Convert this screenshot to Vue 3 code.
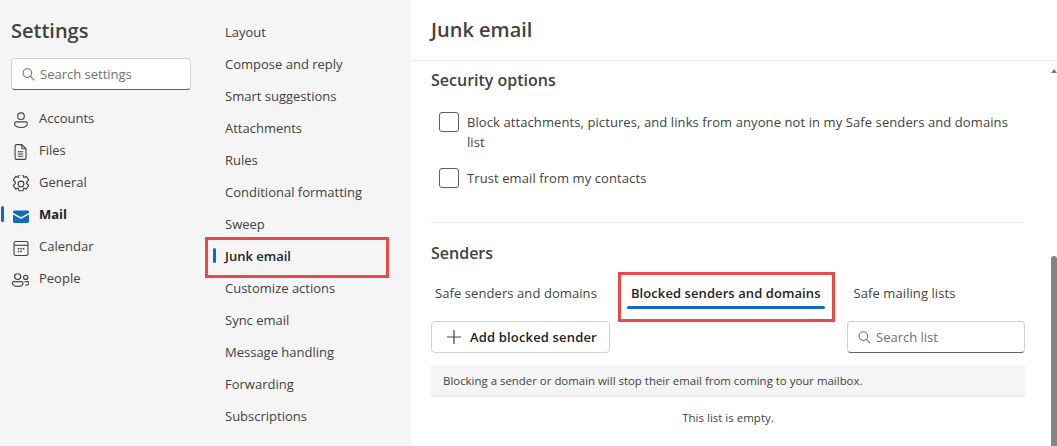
<template>
  <div class="settings">
    <!-- first column -->
    <aside class="nav">
      <h1>Settings</h1>
      <div class="search nav-search">
        <svg class="search-ico" viewBox="0 0 16 16"><circle cx="6.8" cy="6.5" r="4.6" /><path d="M10.2 10l4 4.2" /></svg>
        <span>Search settings</span>
      </div>
      <ul class="nav-list">
        <li v-for="item in navItems" :key="item.name" :class="{ on: item.name === 'Mail' }">
          <svg class="nav-ico" viewBox="0 0 18 18" v-html="item.icon"></svg>
          {{ item.name }}
        </li>
      </ul>
    </aside>

    <!-- second column -->
    <nav class="sub">
      <div
        v-for="item in subItems"
        :key="item"
        class="sub-item"
        :class="{ on: item === 'Junk email' }"
      >
        {{ item }}
      </div>
      <div class="mark sub-mark"></div>
    </nav>

    <!-- content -->
    <main class="content">
      <header class="title">Junk email</header>
      <div class="body">
        <h2>Security options</h2>
        <label class="check first">
          <i class="box"></i>
          <span>Block attachments, pictures, and links from anyone not in my Safe senders and domains list</span>
        </label>
        <label class="check second">
          <i class="box"></i>
          <span>Trust email from my contacts</span>
        </label>
        <hr />
        <h2 class="senders">Senders</h2>
        <div class="tabs">
          <div class="tab">Safe senders and domains</div>
          <div class="tab active">Blocked senders and domains</div>
          <div class="tab">Safe mailing lists</div>
          <div class="mark tab-mark"></div>
        </div>
        <div class="tools">
          <button class="add">
            <svg viewBox="0 0 16 16"><path d="M8 1v14M1 8h14" /></svg>
            Add blocked sender
          </button>
          <div class="search list-search">
            <svg class="search-ico" viewBox="0 0 16 16"><circle cx="6.8" cy="6.5" r="4.6" /><path d="M10.2 10l4 4.2" /></svg>
            <span>Search list</span>
          </div>
        </div>
        <div class="note">Blocking a sender or domain will stop their email from coming to your mailbox.</div>
        <div class="empty">This list is empty.</div>
      </div>
      <div class="scroll">
        <i class="arrow"></i>
        <i class="thumb"></i>
      </div>
    </main>
  </div>
</template>

<script setup>
const navItems = [
  { name: "Accounts", icon: '<g transform="translate(1 0)"><circle cx="9" cy="5.2" r="3.3"/><path d="M2.6 12.6c0-1 .8-1.7 1.8-1.7h9.2c1 0 1.8.7 1.8 1.7 0 2.6-3 3.9-6.4 3.9s-6.4-1.3-6.4-3.900z"/></g>' },
  { name: "Files", icon: '<g transform="translate(1 0)"><path d="M4.5 1.6h5.3l4.2 4.2v9.2c0 .8-.6 1.4-1.4 1.4H4.5c-.8 0-1.4-.6-1.4-1.4V3c0-.8.6-1.4 1.4-1.4z"/><path d="M9.8 1.6v3.2c0 .6.4 1 1 1H14M5.800 8.800h5.400M5.800 11h5.400M5.800 13.200h5.400"/></g>' },
  { name: "General", icon: '<g transform="translate(10 9) scale(1.25) translate(-9 -9)" stroke-width=".9"><circle cx="9" cy="9" r="2.3"/><path d="M7.3 1.6h3.4l.5 2.2 2-.9 2 3-1.6 1.5v1.2l1.600 1.500-2 3-2-.9-.5 2.200H7.300l-.5-2.200-2 .9-2-3 1.600-1.500V7.400L2.800 5.900l2-3 2 .9z" stroke-linejoin="round"/></g>' },
  { name: "Mail", icon: '<g transform="translate(1 1.5)"><path class="fill" d="M1 3.5c0-.9.8-1.500 1.800-1.500h12.400c1 0 1.800.6 1.800 1.500v.8L9 8.700 1 4.300z"/><path class="fill" d="M1 6l7.600 4.200c.3.1.5.1.8 0L17 6v6.800c0 1-.8 1.800-1.800 1.800H2.800c-1 0-1.800-.8-1.800-1.800z"/></g>' },
  { name: "Calendar", icon: '<g transform="translate(.5 .5)"><rect x="2.5" y="2" width="14" height="14" rx="1.8"/><path d="M2.5 5.800h14"/><path class="dots" d="M6.300 8.600h1.500v1.500H6.300zM8.800 8.600h1.500v1.500H8.800zM11.300 8.600h1.500v1.500h-1.500zM6.300 11.300h1.500v1.500H6.300zM8.800 11.300h1.500v1.500H8.800z"/></g>' },
  { name: "People", icon: '<g transform="scale(1.08 1)"><circle cx="6.2" cy="5.6" r="2.9"/><circle cx="13.6" cy="6.4" r="2"/><path d="M1.3 12c0-.9.7-1.400 1.500-1.400h6.800c.8 0 1.500.5 1.500 1.400 0 2.400-2.400 3.400-4.900 3.400S1.300 14.400 1.300 12zM12.600 10.600h3c.7 0 1.200.5 1.200 1.200 0 1.700-1.500 2.500-3.600 2.500"/></g>' },
]

const subItems = [
  "Layout",
  "Compose and reply",
  "Smart suggestions",
  "Attachments",
  "Rules",
  "Conditional formatting",
  "Sweep",
  "Junk email",
  "Customize actions",
  "Sync email",
  "Message handling",
  "Forwarding",
  "Subscriptions",
]
</script>

<style>
html,
body {
  margin: 0;
  background: #fff;
  overflow: hidden;
}
</style>

<style scoped>
.settings {
  display: flex;
  height: 446px;
  width: 1057px;
  overflow: hidden;
  font-family: "Open Sans", "Noto Sans", sans-serif;
  font-size: 13px;
  color: #424242;
}

.nav {
  width: 206px;
  flex: none;
  background: #f5f5f5;
  padding: 0 0 0 11px;
  box-sizing: border-box;
}

h1 {
  margin: 16px 0 0;
  font-size: 20px;
  line-height: 30px;
  font-weight: 600;
  color: #424242;
}

.search {
  display: flex;
  align-items: center;
  box-sizing: border-box;
  height: 32px;
  background: #fff;
  border: 1px solid #d1d1d1;
  border-bottom-color: #616161;
  border-radius: 4px;
  color: #707070;
}

.nav-search {
  width: 180px;
  margin-top: 12px;
  padding-left: 9px;
}

.search-ico {
  width: 15px;
  height: 15px;
  margin-right: 4px;
  fill: none;
  stroke: #707070;
  stroke-width: 1.1;
}

.nav-list {
  list-style: none;
  margin: 12px 0 0;
  padding: 0;
}

.nav-list li {
  position: relative;
  display: flex;
  align-items: center;
  height: 32px;
  gap: 10px;
  color: #424242;
}

.nav-ico {
  width: 18px;
  height: 18px;
  flex: none;
  margin-top: 3px;
  fill: none;
  stroke: #424242;
  stroke-width: 1.1;
}

.nav-ico :deep(.fill) {
  fill: #0f6cbd;
  stroke: none;
}

.nav-ico :deep(.dots) {
  fill: #424242;
  stroke: none;
}

.nav-list li.on {
  font-weight: 700;
  color: #242424;
}

.nav-list li.on::before {
  content: "";
  position: absolute;
  left: -10px;
  top: 8px;
  width: 3px;
  height: 16px;
  border-radius: 2px;
  background: #0f6cbd;
}

.sub {
  position: relative;
  width: 205px;
  flex: none;
  background: #f5f5f5;
  padding: 16px 0 0 19px;
  box-sizing: border-box;
}

.sub-item {
  position: relative;
  height: 32px;
  line-height: 32px;
}

.sub-item.on {
  font-weight: 600;
  color: #242424;
}

.sub-item.on::before {
  content: "";
  position: absolute;
  left: -12px;
  top: 8px;
  width: 3px;
  height: 15px;
  border-radius: 2px;
  background: #0f6cbd;
}

.mark {
  position: absolute;
  border: 3px solid #e64a49;
  box-sizing: border-box;
  pointer-events: none;
}

.sub-mark {
  left: -1px;
  top: 237px;
  width: 184px;
  height: 41px;
}

.content {
  position: relative;
  flex: 1;
  min-width: 0;
  background: #fff;
}

.title {
  height: 61px;
  box-sizing: border-box;
  border-bottom: 1px solid #ebebeb;
  padding: 15px 0 0 20px;
  font-size: 20px;
  line-height: 30px;
  font-weight: 600;
  color: #424242;
}

.body {
  width: 594px;
  margin-left: 20px;
}

h2 {
  margin: 8px 0 0;
  font-size: 16px;
  line-height: 22px;
  font-weight: 600;
  color: #424242;
}

.check {
  display: flex;
  gap: 8px;
  margin-left: 8px;
  line-height: 20px;
  letter-spacing: 0.09px;
}

.check span {
  width: 551px;
}

.check.first {
  margin-top: 21px;
}

.check.second {
  margin-top: 16px;
}

.box {
  flex: none;
  width: 20px;
  height: 20px;
  box-sizing: border-box;
  border: 1px solid #616161;
  border-radius: 3px;
}

hr {
  border: 0;
  border-top: 1px solid #ebebeb;
  margin: 34px 0 0;
}

.senders {
  margin-top: 19px;
}

.tabs {
  position: relative;
  display: flex;
  margin-top: 11px;
  height: 38px;
  letter-spacing: 0.08px;
}

.tab {
  padding: 0 4px;
  height: 38px;
  line-height: 36px;
  margin-right: 26px;
}

.tab.active {
  font-weight: 600;
  color: #242424;
  position: relative;
  margin-right: 25px;
}

.tab.active::after {
  content: "";
  position: absolute;
  left: 0;
  right: 0;
  bottom: 4px;
  height: 3px;
  border-radius: 2px;
  background: #0f6cbd;
}

.tab-mark {
  left: 187px;
  top: -3px;
  width: 217px;
  height: 50px;
}

.tools {
  display: flex;
  justify-content: space-between;
  margin-top: 8px;
}

.add {
  display: flex;
  align-items: center;
  gap: 8px;
  box-sizing: border-box;
  width: 179px;
  height: 32px;
  padding: 0 0 0 14px;
  background: #fff;
  border: 1px solid #d1d1d1;
  border-radius: 4px;
  font: 600 13px "Open Sans", "Noto Sans", sans-serif;
  letter-spacing: 0.16px;
  color: #242424;
}

.add svg {
  width: 16px;
  height: 16px;
  fill: none;
  stroke: #424242;
  stroke-width: 1.2;
}

.list-search {
  width: 178px;
  padding-left: 9px;
}

.note {
  margin-top: 12px;
  height: 32px;
  box-sizing: border-box;
  background: #f5f5f5;
  border-bottom: 2px solid #ebebeb;
  padding-left: 12px;
  line-height: 31px;
  font-size: 11.43px;
}

.empty {
  margin-top: 11px;
  text-align: center;
  font-size: 11.5px;
  line-height: 20px;
}

.scroll {
  position: absolute;
  right: 0;
  top: 60px;
  bottom: 0;
  width: 6px;
}

.arrow {
  position: absolute;
  right: 0;
  top: 9px;
  border-left: 3px solid transparent;
  border-right: 3px solid transparent;
  border-bottom: 4px solid #777;
}

.thumb {
  position: absolute;
  right: 0;
  top: 196px;
  bottom: 0;
  width: 6px;
  border-radius: 3px 3px 0 0;
  background: #858585;
}
</style>
